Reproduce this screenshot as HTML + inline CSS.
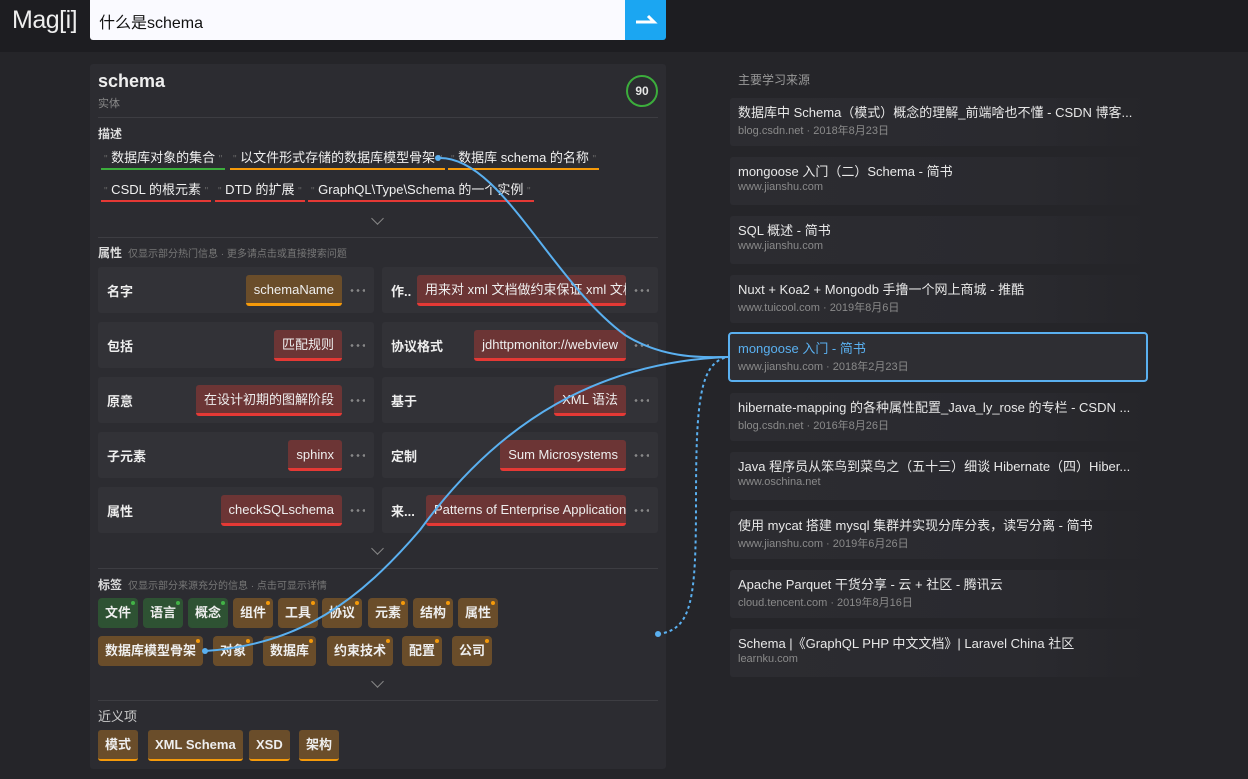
<!DOCTYPE html>
<html><head><meta charset="utf-8"><style>
*{box-sizing:border-box;margin:0;padding:0}
body{width:1248px;height:779px;background:#252529;font-family:"Liberation Sans","Noto Sans CJK SC",sans-serif;color:#e6e6e6;position:relative;overflow:hidden}
.a{position:absolute}
.hdr{left:0;top:0;width:1248px;height:52px;background:#1d1d21}
.logo{left:12px;top:6px;font-family:"Liberation Sans",sans-serif;font-size:25px;color:#eee;letter-spacing:-0.5px}
.search{left:90px;top:0;width:536px;height:40px;background:#fafaff;border-radius:0 0 0 3px;color:#111;font-size:16px;padding:9px 9px}
.btn{left:625px;top:0;width:41px;height:40px;background:#1ba6f2;border-radius:0 0 3px 0}
.card{left:90px;top:64px;width:576px;height:705px;background:#2c2c31;border-radius:3px}
.hr{height:1px;background:#3d3d42;left:98px;width:560px}
.sec{font-size:12px;color:#ddd;font-weight:bold}
.sub{font-size:10px;color:#777;font-weight:normal;margin-left:6px}
.desc{font-size:13px;color:#f0f0f0;height:22px;border-bottom:2px solid;padding:0 3px;white-space:nowrap;line-height:20px}
.q{color:#666;font-size:10px;font-weight:normal}
.row{width:276px;height:46px;background:#323237;border-radius:3px}
.row .k{position:absolute;left:9px;top:14px;font-size:13px;font-weight:bold;color:#eee}
.row .v{position:absolute;right:32px;top:8px;height:31px;background:#6c3535;border-bottom:3px solid #e53935;border-radius:3px;font-size:13px;color:#eee;padding:2px 8px 0;line-height:26px;white-space:nowrap;overflow:hidden}
.row .d{position:absolute;right:9px;top:22px;width:16px;height:3px;background:radial-gradient(circle,#888 1.2px,transparent 1.5px) 0 0/6px 3px repeat-x}
.tag{height:30px;border-radius:4px;font-size:13px;font-weight:bold;color:#eee;padding:0 7px;line-height:30px;background:#6a4d2a}
.tag.g{background:#2e5233}
.tag:after{content:"";position:absolute;right:3px;top:3px;width:4px;height:4px;border-radius:2px;background:#f59a0a}
.tag.g:after{background:#43b347}
.syn{height:31px;border-radius:3px;font-size:13px;font-weight:bold;color:#eee;padding:0 7px;line-height:29px;background:#6a4d2a;border-bottom:2px solid #f59a0a}
.src{left:730px;width:418px;height:48px;border-radius:3px;background:linear-gradient(90deg,#2c2c31 0%,#2a2a2f 70%,#252529 100%);padding:4px 8px}
.src .t{font-size:13px;color:#e8e8e8;white-space:nowrap;overflow:hidden;text-overflow:ellipsis;width:400px}
.src .u{font-size:11px;color:#8a8a8a;margin-top:1px}
.chev{width:9px;height:9px;border-right:1px solid #888;border-bottom:1px solid #888;transform:rotate(45deg)}
</style></head><body>
<div class="a hdr"></div>
<div class="a logo">Mag[i]</div>
<div class="a search">什么是schema</div>
<div class="a btn"><svg width="41" height="40"><path d="M11 22 L29 22 L23 16" stroke="#fff" stroke-width="3" fill="none"/></svg></div>

<div class="a card"></div>
<div class="a" style="left:98px;top:71px;font-size:18px;font-weight:bold;color:#eee">schema</div>
<div class="a" style="left:98px;top:95px;font-size:11px;color:#888">实体</div>
<div class="a" style="left:626px;top:75px;width:32px;height:32px;border:2px solid #3cad3c;border-radius:50%;font-size:12px;font-weight:bold;text-align:center;line-height:28px">90</div>
<div class="a hr" style="top:117px"></div>
<div class="a sec" style="left:98px;top:125px">描述</div>

<div class="a desc" style="left:101px;top:148px;border-color:#3cad3c"><span class="q">"</span> 数据库对象的集合 <span class="q">"</span></div>
<div class="a desc" style="left:230px;top:148px;border-color:#f59a0a"><span class="q">"</span> 以文件形式存储的数据库模型骨架 <span class="q">"</span></div>
<div class="a desc" style="left:448px;top:148px;border-color:#f59a0a"><span class="q">"</span> 数据库 schema 的名称 <span class="q">"</span></div>
<div class="a desc" style="left:101px;top:180px;border-color:#e53935"><span class="q">"</span> CSDL 的根元素 <span class="q">"</span></div>
<div class="a desc" style="left:215px;top:180px;border-color:#e53935"><span class="q">"</span> DTD 的扩展 <span class="q">"</span></div>
<div class="a desc" style="left:308px;top:180px;border-color:#e53935"><span class="q">"</span> GraphQL\Type\Schema 的一个实例 <span class="q">"</span></div>
<div class="a chev" style="left:373px;top:214px"></div>
<div class="a hr" style="top:237px"></div>
<div class="a sec" style="left:98px;top:244px">属性<span class="sub">仅显示部分热门信息 · 更多请点击或直接搜索问题</span></div>

<div class="a row" style="left:98px;top:267px"><span class="k">名字</span><span class="v" style="background:#6a4d2a;border-color:#f59a0a">schemaName</span><span class="d"></span></div>
<div class="a row" style="left:382px;top:267px"><span class="k">作..</span><span class="v" style="width:209px">用来对 xml 文档做约束保证 xml 文档</span><span class="d"></span></div>
<div class="a row" style="left:98px;top:322px"><span class="k">包括</span><span class="v">匹配规则</span><span class="d"></span></div>
<div class="a row" style="left:382px;top:322px"><span class="k">协议格式</span><span class="v">jdhttpmonitor://webview</span><span class="d"></span></div>
<div class="a row" style="left:98px;top:377px"><span class="k">原意</span><span class="v">在设计初期的图解阶段</span><span class="d"></span></div>
<div class="a row" style="left:382px;top:377px"><span class="k">基于</span><span class="v">XML 语法</span><span class="d"></span></div>
<div class="a row" style="left:98px;top:432px"><span class="k">子元素</span><span class="v">sphinx</span><span class="d"></span></div>
<div class="a row" style="left:382px;top:432px"><span class="k">定制</span><span class="v">Sum Microsystems</span><span class="d"></span></div>
<div class="a row" style="left:98px;top:487px"><span class="k">属性</span><span class="v">checkSQLschema</span><span class="d"></span></div>
<div class="a row" style="left:382px;top:487px"><span class="k">来...</span><span class="v" style="width:200px">Patterns of Enterprise Application</span><span class="d"></span></div>
<div class="a chev" style="left:373px;top:544px"></div>
<div class="a hr" style="top:568px"></div>
<div class="a sec" style="left:98px;top:576px">标签<span class="sub">仅显示部分来源充分的信息 · 点击可显示详情</span></div>

<div class="a tag g" style="left:98px;top:598px">文件</div>
<div class="a tag g" style="left:143px;top:598px">语言</div>
<div class="a tag g" style="left:188px;top:598px">概念</div>
<div class="a tag" style="left:233px;top:598px">组件</div>
<div class="a tag" style="left:278px;top:598px">工具</div>
<div class="a tag" style="left:322px;top:598px">协议</div>
<div class="a tag" style="left:368px;top:598px">元素</div>
<div class="a tag" style="left:413px;top:598px">结构</div>
<div class="a tag" style="left:458px;top:598px">属性</div>
<div class="a tag" style="left:98px;top:636px">数据库模型骨架</div>
<div class="a tag" style="left:213px;top:636px">对象</div>
<div class="a tag" style="left:263px;top:636px">数据库</div>
<div class="a tag" style="left:327px;top:636px">约束技术</div>
<div class="a tag" style="left:402px;top:636px">配置</div>
<div class="a tag" style="left:452px;top:636px">公司</div>
<div class="a chev" style="left:373px;top:677px"></div>
<div class="a hr" style="top:700px"></div>
<div class="a sec" style="left:98px;top:706px;font-weight:normal;color:#ccc;font-size:13px">近义项</div>
<div class="a syn" style="left:98px;top:730px">模式</div>
<div class="a syn" style="left:148px;top:730px">XML Schema</div>
<div class="a syn" style="left:249px;top:730px">XSD</div>
<div class="a syn" style="left:299px;top:730px">架构</div>

<div class="a" style="left:738px;top:71px;font-size:12px;color:#999">主要学习来源</div>
<div class="a src" style="top:98px"><div class="t">数据库中 Schema（模式）概念的理解_前端啥也不懂 - CSDN 博客...</div><div class="u">blog.csdn.net · 2018年8月23日</div></div>
<div class="a src" style="top:157px"><div class="t">mongoose 入门（二）Schema - 简书</div><div class="u">www.jianshu.com</div></div>
<div class="a src" style="top:216px"><div class="t">SQL 概述 - 简书</div><div class="u">www.jianshu.com</div></div>
<div class="a src" style="top:275px"><div class="t">Nuxt + Koa2 + Mongodb 手撸一个网上商城 - 推酷</div><div class="u">www.tuicool.com · 2019年8月6日</div></div>
<div class="a src" style="top:332px;left:728px;width:420px;height:50px;border:2px solid #5ab0f0;border-radius:4px;background:#2e2e33;padding:4px 8px"><div class="t" style="color:#5ab0f0">mongoose 入门 - 简书</div><div class="u">www.jianshu.com · 2018年2月23日</div></div>
<div class="a src" style="top:393px"><div class="t">hibernate-mapping 的各种属性配置_Java_ly_rose 的专栏 - CSDN ...</div><div class="u">blog.csdn.net · 2016年8月26日</div></div>
<div class="a src" style="top:452px"><div class="t">Java 程序员从笨鸟到菜鸟之（五十三）细谈 Hibernate（四）Hiber...</div><div class="u">www.oschina.net</div></div>
<div class="a src" style="top:511px"><div class="t">使用 mycat 搭建 mysql 集群并实现分库分表，读写分离 - 简书</div><div class="u">www.jianshu.com · 2019年6月26日</div></div>
<div class="a src" style="top:570px"><div class="t">Apache Parquet 干货分享 - 云 + 社区 - 腾讯云</div><div class="u">cloud.tencent.com · 2019年8月16日</div></div>
<div class="a src" style="top:629px"><div class="t">Schema |《GraphQL PHP 中文文档》| Laravel China 社区</div><div class="u">learnku.com</div></div>

<svg class="a" style="left:0;top:0" width="1248" height="779">
<g fill="none" stroke="#5ab0f0" stroke-width="2">
<path d="M438,158 C500,155 550,280 625,335 C665,360 705,357 728,357"/>
<path d="M205,651 C300,645 360,600 420,530 C500,420 600,362 728,357"/>
<path d="M658,634 C692,630 696,600 696,500 C696,400 700,362 728,357" stroke-dasharray="3,3"/>
</g>
<g fill="#5ab0f0"><circle cx="438" cy="158" r="3"/><circle cx="205" cy="651" r="3"/><circle cx="658" cy="634" r="3"/></g>
</svg>
</body></html>
